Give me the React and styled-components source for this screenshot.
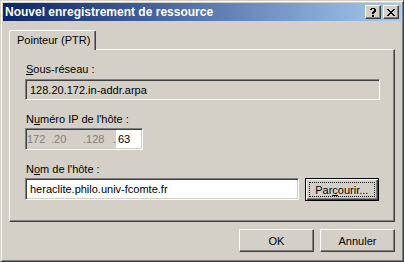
import React from 'react';
import styled, { createGlobalStyle, css } from 'styled-components';

const FACE = '#d4d0c8';
const SHADOW = '#808080';
const DARK = '#404040';
const LIGHT = '#ffffff';

const GlobalStyle = createGlobalStyle`
  html, body { margin: 0; padding: 0; background: ${FACE}; }
  body { font-family: "Liberation Sans", Arial, sans-serif; font-size: 11px; color: #000; }
  * { box-sizing: border-box; }
`;

const Window = styled.div`
  width: 404px;
  height: 262px;
  background: ${FACE};
  border: 1px solid;
  border-color: ${FACE} ${DARK} ${DARK} ${FACE};
  box-shadow: inset 1px 1px ${LIGHT}, inset -1px -1px ${SHADOW};
  padding: 2px;
  display: flex;
  flex-direction: column;
`;

const TitleBar = styled.div`
  height: 18px;
  flex: none;
  display: flex;
  align-items: center;
  padding: 0 2px 0 2px;
  background: linear-gradient(to right, #0a246a, #a6caf0);
`;

const TitleText = styled.div`
  flex: 1;
  color: #fff;
  font-weight: bold;
  font-size: 12px;
  line-height: 14px;
  white-space: nowrap;
`;

const CaptionButton = styled.div`
  width: 16px;
  height: 14px;
  margin-left: ${(p) => (p.$gap ? '2px' : '0')};
  background: ${FACE};
  border: 1px solid;
  border-color: ${LIGHT} ${DARK} ${DARK} ${LIGHT};
  box-shadow: inset -1px -1px ${SHADOW};
  display: flex;
  align-items: center;
  justify-content: center;
`;

const Body = styled.div`
  flex: 1;
  display: flex;
  flex-direction: column;
  padding: 9px 6px 0 6px;
`;

const TabStrip = styled.div`
  display: flex;
  height: 19px;
`;

const Tab = styled.div`
  position: relative;
  z-index: 1;
  height: 20px;
  width: 87px;
  margin-bottom: -1px;
  background: ${FACE};
  border-left: 1px solid ${LIGHT};
  border-top: 1px solid ${LIGHT};
  border-right: 1px solid ${DARK};
  border-top-left-radius: 2px;
  border-top-right-radius: 2px;
  box-shadow: inset -1px 0 ${SHADOW};
  padding: 3px 0 0 7px;
  line-height: 13px;
  white-space: nowrap;
`;

const Panel = styled.div`
  height: 173px;
  border: 1px solid;
  border-color: ${LIGHT} ${DARK} ${DARK} ${LIGHT};
  box-shadow: inset -1px -1px ${SHADOW};
  padding: 13px 15px 0 15px;
  display: flex;
  flex-direction: column;
`;

const Label = styled.div`
  height: 13px;
  line-height: 13px;
  padding-left: 1px;
  margin-top: ${(p) => p.$top || 0}px;
  margin-bottom: ${(p) => p.$bottom || 3}px;
  white-space: nowrap;
`;

const Key = styled.span`
  text-decoration: underline;
`;

const sunken = css`
  border: 1px solid;
  border-color: ${SHADOW} ${LIGHT} ${LIGHT} ${SHADOW};
  box-shadow: inset 1px 1px ${DARK}, inset -1px -1px ${FACE};
`;

const Edit = styled.div`
  ${sunken};
  width: ${(p) => p.$w}px;
  height: ${(p) => p.$h || 21}px;
  background: ${(p) => (p.$readonly ? FACE : LIGHT)};
  padding: 0 0 0 4px;
  display: flex;
  align-items: center;
  white-space: nowrap;
`;

const IpField = styled.div`
  ${sunken};
  width: 118px;
  height: 22px;
  background: ${FACE};
  display: flex;
  align-items: stretch;
  padding: 1px 1px 1px 1px;
  color: ${SHADOW};
`;

const Octet = styled.div`
  width: ${(p) => p.$w}px;
  display: flex;
  align-items: center;
  background: ${(p) => (p.$active ? LIGHT : 'transparent')};
  color: ${(p) => (p.$active ? '#000' : SHADOW)};
  padding-left: ${(p) => (p.$active ? 2 : 0)}px;
`;

const Row = styled.div`
  display: flex;
  align-items: flex-start;
  gap: 6px;
`;

const Button = styled.button`
  width: 75px;
  height: 23px;
  padding: 0;
  margin: 0;
  font-family: inherit;
  font-size: 11px;
  color: #000;
  background: ${FACE};
  border: 1px solid;
  ${(p) =>
    p.$default
      ? css`
          border-color: #000;
          box-shadow: inset 1px 1px ${LIGHT}, inset -1px -1px ${DARK}, inset -2px -2px ${SHADOW};
          padding: 3px;
        `
      : css`
          border-color: ${LIGHT} ${DARK} ${DARK} ${LIGHT};
          box-shadow: inset -1px -1px ${SHADOW};
        `}
  display: flex;
  align-items: center;
  justify-content: center;
`;

const Focus = styled.span`
  flex: 1;
  align-self: stretch;
  border: 1px dotted #000;
  display: flex;
  align-items: center;
  justify-content: center;
`;

const Footer = styled.div`
  display: flex;
  justify-content: flex-end;
  gap: 6px;
  margin-top: 7px;
`;

const HelpGlyph = () => (
  <svg width="8" height="9" viewBox="0 0 8 9" shapeRendering="crispEdges">
    <path d="M1 1h1v-1h4v1h1v3h-1v1h-1v1h-2v-2h1v-1h1v-2h-2v1h-2z M3 7h2v2h-2z" fill="#000" />
  </svg>
);

const CloseGlyph = () => (
  <svg width="8" height="7" viewBox="0 0 8 7" shapeRendering="crispEdges">
    <path
      d="M0 0h2v1h1v1h2v-1h1v-1h2v1h-1v1h-1v1h-1v1h1v1h1v1h1v1h-2v-1h-1v-1h-2v1h-1v1h-2v-1h1v-1h1v-1h1v-1h-1v-1h-1v-1h-1z"
      fill="#000"
    />
  </svg>
);

export default function App() {
  return (
    <>
      <GlobalStyle />
      <Window>
        <TitleBar>
          <TitleText>Nouvel enregistrement de ressource</TitleText>
          <CaptionButton><HelpGlyph /></CaptionButton>
          <CaptionButton $gap><CloseGlyph /></CaptionButton>
        </TitleBar>
        <Body>
          <TabStrip>
            <Tab>Pointeur (PTR)</Tab>
          </TabStrip>
          <Panel>
            <Label>
              <Key>S</Key>ous-réseau :
            </Label>
            <Edit $w={355} $readonly>128.20.172.in-addr.arpa</Edit>
            <Label $top={13} $bottom={2}>
              N<Key>u</Key>méro IP de l'hôte :
            </Label>
            <IpField>
              <Octet $w={24}>172</Octet>
              <Octet $w={32}>.20</Octet>
              <Octet $w={30}>.128</Octet>
              <Octet $w={3}>.</Octet>
              <Octet $w={25} $active>63</Octet>
            </IpField>
            <Label $top={13} $bottom={2}>
              N<Key>o</Key>m de l'hôte :
            </Label>
            <Row>
              <Edit $w={276} $h={22}>heraclite.philo.univ-fcomte.fr</Edit>
              <Button $default>
                <Focus>
                  Par<Key>c</Key>ourir...
                </Focus>
              </Button>
            </Row>
          </Panel>
          <Footer>
            <Button>OK</Button>
            <Button>Annuler</Button>
          </Footer>
        </Body>
      </Window>
    </>
  );
}
